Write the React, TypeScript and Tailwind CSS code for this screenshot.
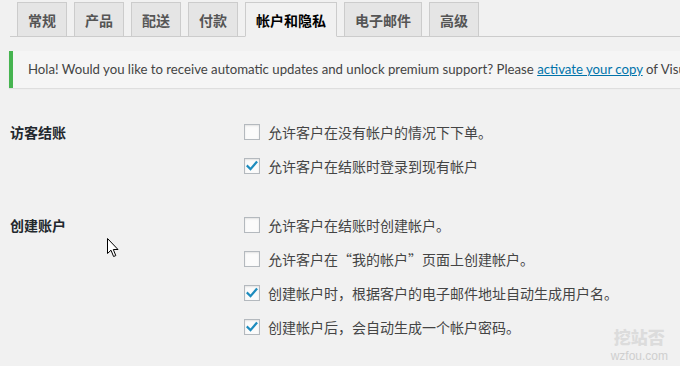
const tabs = ['常规', '产品', '配送', '付款', '帐户和隐私', '电子邮件', '高级'];
const activeTab = '帐户和隐私';

const cjk = { fontFamily: '"Noto Sans CJK SC", "Noto Sans", sans-serif' };

interface Option {
  label: string;
  checked: boolean;
}

const sections: { title: string; options: Option[] }[] = [
  {
    title: '访客结账',
    options: [
      { label: '允许客户在没有帐户的情况下下单。', checked: false },
      { label: '允许客户在结账时登录到现有帐户', checked: true },
    ],
  },
  {
    title: '创建账户',
    options: [
      { label: '允许客户在结账时创建帐户。', checked: false },
      { label: '允许客户在“我的帐户”页面上创建帐户。', checked: false },
      { label: '创建帐户时，根据客户的电子邮件地址自动生成用户名。', checked: true },
      { label: '创建帐户后，会自动生成一个帐户密码。', checked: true },
    ],
  },
];

function CheckBox({ checked }: { checked: boolean }) {
  return (
    <span className="flex h-4 w-4 shrink-0 items-center justify-center border border-[#b4b9be] bg-[#fbfbfb] shadow-[inset_0_1px_2px_rgba(0,0,0,0.1)]">
      {checked && (
        <svg viewBox="0 0 16 16" className="h-[14px] w-[14px]">
          <path d="M3 8.2 L6.3 11.6 L13 3.8" fill="none" stroke="#1e8cbe" strokeWidth="2.6" strokeLinecap="square" />
        </svg>
      )}
    </span>
  );
}

function Cursor() {
  return (
    <svg
      viewBox="0 0 13 20"
      className="pointer-events-none absolute left-[107px] top-[238px] h-[20px] w-[13px]"
    >
      <path
        d="M0.5 0.5 L0.5 15.5 L4 12.2 L6.6 18.5 L8.8 17.6 L6.3 11.5 L11 11.5 Z"
        fill="#fff"
        stroke="#000"
        strokeWidth="1"
        strokeLinejoin="round"
      />
    </svg>
  );
}

export default function App() {
  return (
    <div className="relative h-[366px] w-[680px] overflow-hidden bg-[#f1f1f1]" style={cjk}>
      {/* tabs */}
      <div className="ml-[10px] flex gap-[7px] border-b border-[#ccc] pl-[7px] pt-[2px]">
        {tabs.map((t) => {
          const active = t === activeTab;
          return (
            <div
              key={t}
              className={`-mb-px flex h-[35px] items-center border px-[10px] text-[14px] font-semibold leading-none ${
                active
                  ? 'border-[#ccc] border-b-[#f1f1f1] bg-[#f1f1f1] text-black'
                  : 'border-[#ccc] bg-[#e5e5e5] text-[#555]'
              }`}
            >
              {t}
            </div>
          );
        })}
      </div>

      {/* notice */}
      <div className="ml-[9px] mt-[14px] h-[37px] w-[700px] overflow-hidden whitespace-nowrap border-l-4 border-[#46b450] bg-[#f5f5f5] pl-[15px] shadow-[0_1px_1px_rgba(0,0,0,0.08)]">
        <p
          className="text-[13.2px] leading-[37px] text-[#444]"
          style={{ fontFamily: 'Lato, "Noto Sans", sans-serif' }}
        >
          Hola! Would you like to receive automatic updates and unlock premium support? Please{' '}
          <a className="text-[#0073aa] underline">activate your copy</a> of Visual Composer.
        </p>
      </div>

      {/* settings */}
      <div className="mt-[34px] flex flex-col gap-[39px]">
        {sections.map((s) => (
          <div key={s.title} className="flex">
            <div className="w-[244px] shrink-0 pl-[10px] text-[14px] font-semibold leading-[20px] text-[#23282d]">
              {s.title}
            </div>
            <div className="flex flex-col gap-[14px]">
              {s.options.map((o) => (
                <label key={o.label} className="flex h-[20px] items-center gap-[8px] text-[14px] text-[#444]">
                  <CheckBox checked={o.checked} />
                  <span className="leading-none">{o.label}</span>
                </label>
              ))}
            </div>
          </div>
        ))}
      </div>

      <Cursor />

      {/* watermark */}
      <div className="pointer-events-none absolute right-[12px] top-[328px] flex flex-col items-center leading-none">
        <span className="text-[17px] font-black text-[#dcdcdc]">挖站否</span>
        <span
          className="mt-[5px] text-[12px] text-[#cfcfcf]"
          style={{ fontFamily: '"Liberation Sans", sans-serif' }}
        >
          wzfou.com
        </span>
      </div>
    </div>
  );
}
